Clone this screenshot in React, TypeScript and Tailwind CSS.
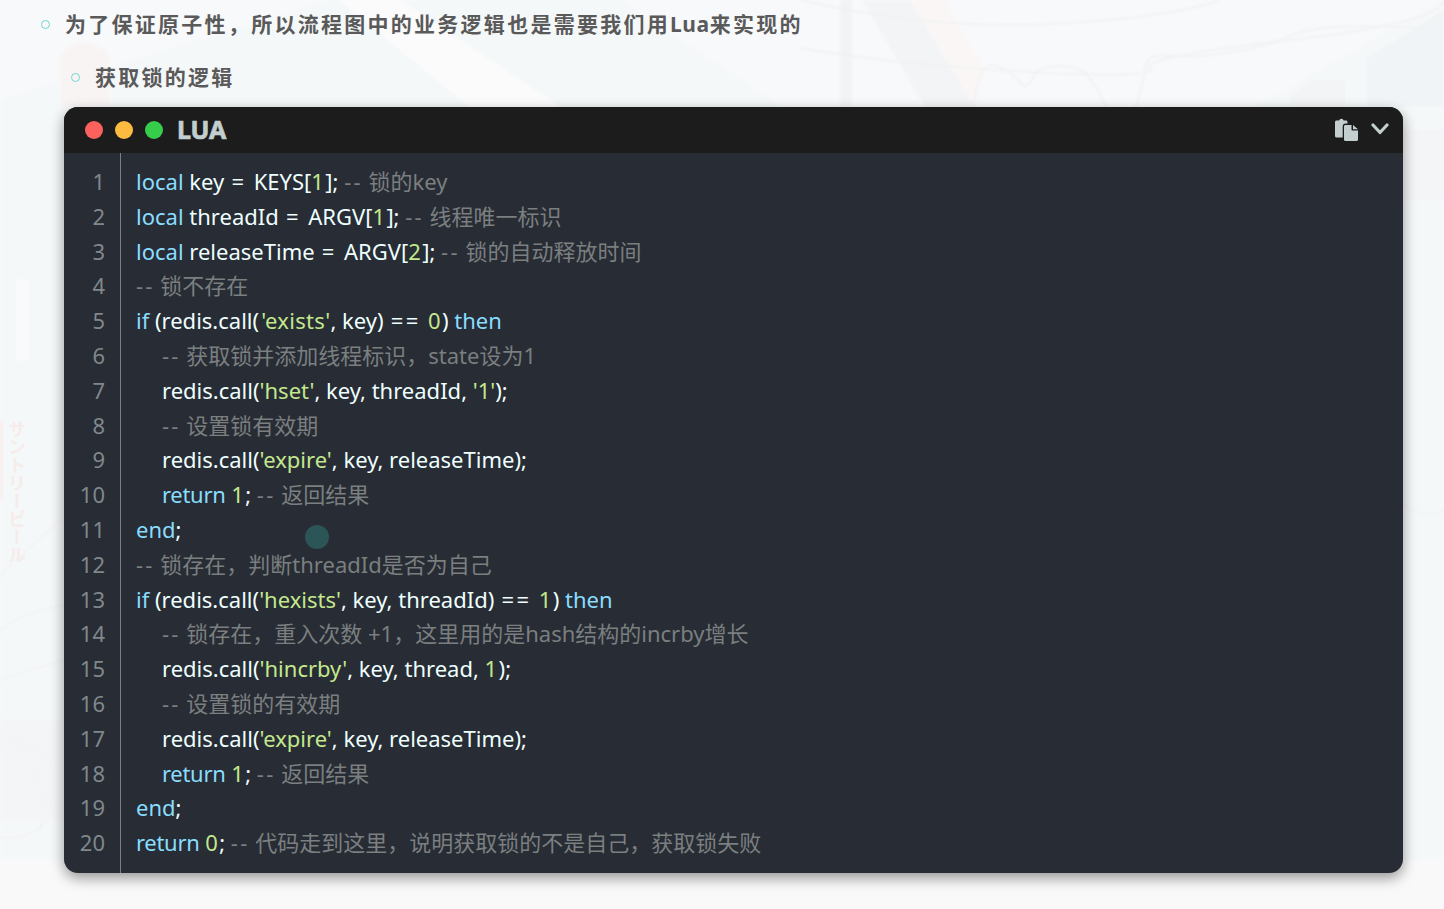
import type { ReactNode } from 'react'

type Kind = 'k' | 'r' | 's' | 'w' | 'n' | 'c' | 't' | 'o' | 'd' | 'i'
type Token = [Kind, string]

const tokenColor: Record<Kind, string> = {
  k: 'text-[#89ddff]',
  r: 'text-[#89ddff] tracking-[-0.3px]',
  s: 'text-[#c3e88d]',
  w: 'text-[#c3e88d] tracking-[0.3px] ml-[2px]',
  n: 'text-[#c3e88d] tracking-[1.4px]',
  c: 'text-[#7a7f80]',
  t: 'text-[#eeffff]',
  o: 'text-[#eeffff] tracking-[2.4px] mx-[1.5px]',
  d: 'text-[#7a7f80] tracking-[2.2px]',
  i: 'inline-block w-[26px]',
}

const lines: Token[][] = [
  [['k', 'local'], ['t', ' key '], ['o', '='], ['t', ' KEYS['], ['n', '1'], ['t', '];'], ['c', ' '], ['d', '--'], ['c', ' 锁的key']],
  [['k', 'local'], ['t', ' threadId '], ['o', '='], ['t', ' ARGV['], ['n', '1'], ['t', '];'], ['c', ' '], ['d', '--'], ['c', ' 线程唯一标识']],
  [['k', 'local'], ['t', ' releaseTime '], ['o', '='], ['t', ' ARGV['], ['n', '2'], ['t', '];'], ['c', ' '], ['d', '--'], ['c', ' 锁的自动释放时间']],
  [['d', '--'], ['c', ' 锁不存在']],
  [['k', 'if'], ['t', ' (redis.call('], ['w', "'exists'"], ['t', ', key) '], ['o', '=='], ['t', ' '], ['n', '0'], ['t', ') '], ['k', 'then']],
  [['i', ''], ['d', '--'], ['c', ' 获取锁并添加线程标识，state设为1']],
  [['i', ''], ['t', 'redis.call('], ['s', "'hset'"], ['t', ', key, threadId, '], ['s', "'1'"], ['t', ');']],
  [['i', ''], ['d', '--'], ['c', ' 设置锁有效期']],
  [['i', ''], ['t', 'redis.call('], ['s', "'expire'"], ['t', ', key, releaseTime);']],
  [['i', ''], ['r', 'return'], ['t', ' '], ['n', '1'], ['t', ';'], ['c', ' '], ['d', '--'], ['c', ' 返回结果']],
  [['k', 'end'], ['t', ';']],
  [['d', '--'], ['c', ' 锁存在，判断threadId是否为自己']],
  [['k', 'if'], ['t', ' (redis.call('], ['s', "'hexists'"], ['t', ', key, threadId) '], ['o', '=='], ['t', ' '], ['n', '1'], ['t', ') '], ['k', 'then']],
  [['i', ''], ['d', '--'], ['c', ' 锁存在，重入次数 +1，这里用的是hash结构的incrby增长']],
  [['i', ''], ['t', 'redis.call('], ['s', "'hincrby'"], ['t', ', key, thread, '], ['n', '1'], ['t', ');']],
  [['i', ''], ['d', '--'], ['c', ' 设置锁的有效期']],
  [['i', ''], ['t', 'redis.call('], ['s', "'expire'"], ['t', ', key, releaseTime);']],
  [['i', ''], ['r', 'return'], ['t', ' '], ['n', '1'], ['t', ';'], ['c', ' '], ['d', '--'], ['c', ' 返回结果']],
  [['k', 'end'], ['t', ';']],
  [['r', 'return'], ['t', ' '], ['n', '0'], ['t', ';'], ['c', ' '], ['d', '--'], ['c', ' 代码走到这里，说明获取锁的不是自己，获取锁失败']],
]

function Bullet({ children, indent }: { children: ReactNode; indent: string }) {
  return (
    <div className={`flex items-center ${indent}`}>
      <span className="h-[9px] w-[9px] shrink-0 rounded-full border-[1.5px] border-[#6fd6d0]" />
      <span className="ml-[15px] text-[21px] font-bold tracking-[2.27px] text-[#5a5a5a]">{children}</span>
    </div>
  )
}

function Backdrop() {
  return (
    <svg className="absolute inset-0 blur-[1px]" width="1444" height="909" viewBox="0 0 1444 909" fill="none">
      <path d="M0 100 L330 0 L620 0 L1000 250 L1444 0 L1444 909 L0 909 Z" fill="#f4f6f8" opacity="0.6" />
      <path d="M340 0 L400 0 L560 107 L470 107 Z" fill="#fbfbfc" />
      <path d="M60 55 Q85 30 110 55 L110 107 L60 107 Z" fill="#f9f4f4" />
      <path d="M840 0 h12 v107 h-12 Z" fill="#f2f3f5" />
      <path d="M862 0 L910 0 L975 107 L925 107 Z" fill="#f2f4f6" />
      <path d="M910 0 L945 0 L985 70 L975 107 Z" fill="#faf6f6" />
      <path d="M1366 58 L1444 10 L1444 107 L1366 107 Z" fill="#f1f4f6" />
      <path d="M1290 107 V95 L1312 80 H1345 V107 Z" fill="#f2f4f6" />
      <g stroke="#eff1f2" strokeWidth="1.5">
        <path d="M800 0 Q930 30 1050 24 T1220 0" />
        <path d="M800 48 Q900 65 1030 72 T1150 68 T1290 40 T1444 0" />
        <path d="M973 107 Q980 65 990 65 Q1005 65 1022 85 Q1030 88 1036 72 Q1060 60 1085 72 Q1100 90 1115 128 Q1135 128 1145 70 Q1148 56 1155 56 H1200 Q1260 50 1290 36 T1420 28 L1444 10" />
        <path d="M0 575 L60 520 M0 630 Q30 610 64 605" />
        <path d="M0 730 Q50 760 40 830 M0 680 L64 660" />
        <circle cx="10" cy="790" r="48" />
        <path d="M1403 505 Q1425 520 1444 510" />
      </g>
      <path d="M17 280 h11 v80 h-11 Z" fill="#fafafb" />
      <path d="M0 420 h3 v80 h-3 Z" fill="#f7ecec" />
      <path d="M0 720 h64 v100 h-64 Z" fill="#f3f4f5" opacity="0.6" />
      <path d="M1403 130 h41 v70 h-41 Z" fill="#f2f4f7" opacity="0.7" />
      <path d="M0 860 H1444 V909 H0 Z" fill="#f9f9f9" />
    </svg>
  )
}

function CopyIcon() {
  return (
    <svg width="23" height="23" viewBox="0 0 23 23" fill="currentColor" className="-mt-[2px]">
      <path d="M1.5 2.5h2.6a2.4 2.4 0 0 1 4.6 0h2.3c.8 0 1.5.7 1.5 1.5v1.6H10.5c-1.6 0-2.8 1.2-2.8 2.8v11.2H1.5c-.8 0-1.5-.7-1.5-1.5V4c0-.8.7-1.5 1.5-1.5Z" />
      <path d="M10.5 7h6v4.8c0 .4.3.7.7.7H23v9c0 .8-.7 1.5-1.5 1.5h-11c-.8 0-1.5-.7-1.5-1.5V8.5C9 7.7 9.7 7 10.5 7Z" />
      <path d="M18 7l5 4.2h-5Z" />
    </svg>
  )
}

function ChevronIcon() {
  return (
    <svg width="18" height="12" viewBox="0 0 18 12" fill="none" stroke="currentColor" strokeWidth="3.2" strokeLinecap="round" strokeLinejoin="round" className="-mt-[2px]">
      <path d="M2 2l7 7.5L16 2" />
    </svg>
  )
}

export default function App() {
  return (
    <div
      className="relative h-[909px] w-[1444px] overflow-hidden bg-[#f8f9fa]"
      style={{ fontFamily: '"Noto Sans", "Noto Sans CJK SC", sans-serif' }}
    >
      <Backdrop />
      <div
        className="absolute left-[8px] top-[420px] text-[18px] font-bold leading-[18px] text-[#f6ecea] [writing-mode:vertical-rl]"
        style={{ fontFamily: '"Noto Sans CJK JP", sans-serif' }}
      >
        サントリービール
      </div>

      <div className="relative flex h-[107px] flex-col">
        <div className="mt-[9px] h-[36px]">
          <Bullet indent="pl-[41px]">
            为了保证原子性，所以流程图中的业务逻辑也是需要我们用<span className="tracking-[0.6px]">Lua</span>来实现的
          </Bullet>
        </div>
        <div className="mt-[17px] h-[36px]">
          <Bullet indent="pl-[71px]">获取锁的逻辑</Bullet>
        </div>
      </div>

      <div className="relative mx-[64px] w-[1339px] overflow-hidden rounded-[14px] bg-[#282c34] shadow-[0_5px_14px_rgba(0,0,0,0.4)]">
        <div className="flex h-[46px] items-center bg-[#1c1c1c] pl-[21px] pr-[14px]">
          <span className="h-[18px] w-[18px] rounded-full bg-[#fc625d]" />
          <span className="ml-[12px] h-[18px] w-[18px] rounded-full bg-[#fdbc40]" />
          <span className="ml-[12px] h-[18px] w-[18px] rounded-full bg-[#35cd4b]" />
          <span className="ml-[14px] text-[25px] font-bold tracking-[-0.2px] text-[#c3cfce] [-webkit-text-stroke:0.7px_#c3cfce]">LUA</span>
          <div className="ml-auto flex items-center gap-[13px] text-[#c3cfce]">
            <CopyIcon />
            <ChevronIcon />
          </div>
        </div>
        <div className="flex text-[22px] leading-[34.8px]">
          <div className="w-[57px] border-r border-[#7a7f80] pb-[13px] pr-[15px] pt-[11px] text-right text-[#7f888c]">
            {lines.map((_, i) => (
              <div key={i} className="h-[34.8px]">{i + 1}</div>
            ))}
          </div>
          <div className="pb-[13px] pl-[15px] pt-[11px]">
            {lines.map((line, i) => (
              <div key={i} className="h-[34.8px] whitespace-pre">
                {line.map(([kind, text], j) => (
                  <span key={j} className={tokenColor[kind]}>{text}</span>
                ))}
              </div>
            ))}
          </div>
        </div>
      </div>

      <div className="absolute left-[305px] top-[525px] h-[24px] w-[24px] rounded-full bg-[#2c5558]" />
    </div>
  )
}
